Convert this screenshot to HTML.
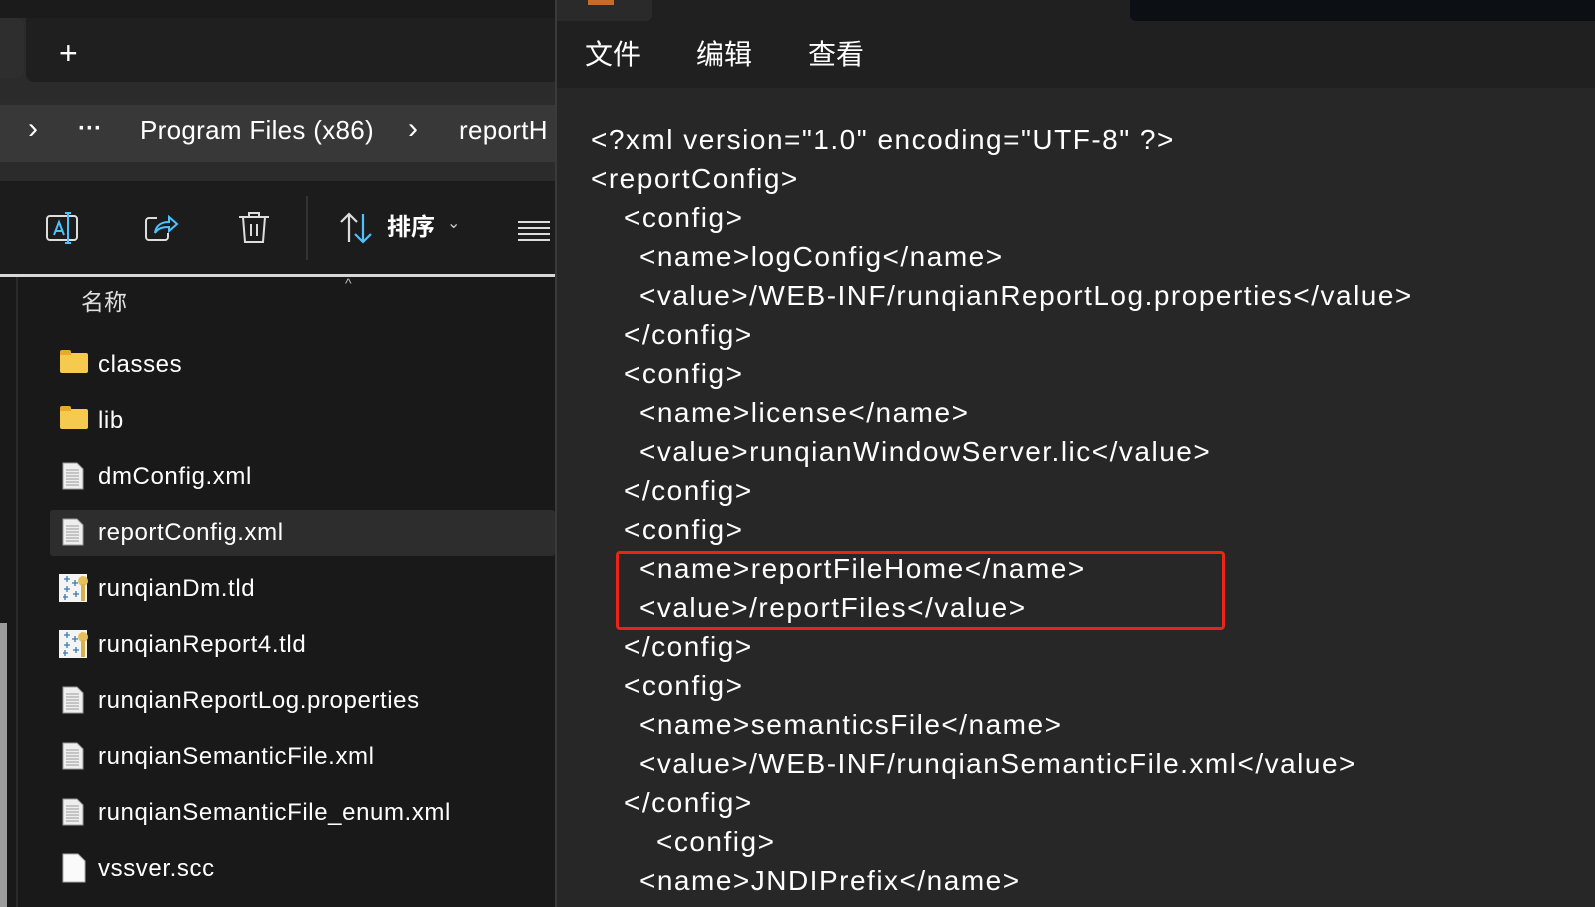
<!DOCTYPE html>
<html><head><meta charset="utf-8"><style>
body{margin:0;width:1595px;height:907px;overflow:hidden;background:#191919;font-family:"Liberation Sans","Noto Sans CJK SC",sans-serif;color:#fff;position:relative}
.a{position:absolute}
.t{position:absolute;white-space:pre;line-height:1}
.ed{font-size:28px;letter-spacing:1.5px}
.f{font-size:24px;letter-spacing:0.6px}
</style></head><body>
<!-- left explorer -->
<div class="a" style="left:0;top:0;width:555px;height:18px;background:#1b1b1b"></div>
<div class="a" style="left:0;top:18px;width:555px;height:82px;background:#2b2b2b"></div>
<div class="a" style="left:26px;top:18px;width:529px;height:64px;background:#1f1f1f;border-radius:0 0 0 8px"></div>
<div class="a" style="left:0;top:18px;width:24px;height:60px;background:#2e2e2e;border-radius:0 8px 8px 0"></div>
<div class="t" style="left:59px;top:37px;font-size:32px;font-weight:300">+</div>
<div class="a" style="left:0;top:99px;width:555px;height:64px;background:#2c2c2c"></div>
<div class="a" style="left:0;top:105px;width:555px;height:57px;background:#383838"></div>
<div class="t" style="left:28px;top:114px;font-size:30px">›</div>
<div class="t" style="left:78px;top:117px;font-size:24px;font-weight:bold">···</div>
<div class="t" style="left:140px;top:117px;font-size:26px;letter-spacing:0.3px">Program Files (x86)</div>
<div class="t" style="left:408px;top:114px;font-size:30px">›</div>
<div class="t" style="left:459px;top:117px;font-size:26px;letter-spacing:0.3px">reportH</div>
<div class="a" style="left:0;top:163px;width:555px;height:18px;background:#2b2b2b"></div>
<div class="a" style="left:0;top:181px;width:555px;height:93px;background:#1c1c1c"></div>
<!-- toolbar icons -->
<svg class="a" style="left:44px;top:208px" width="40" height="40" viewBox="0 0 40 40" fill="none" stroke-width="2"><rect x="3" y="8" width="30" height="24" rx="3" stroke="#ddd"/><path d="M10 27 L15 14 L20 27 M12 23 H18" stroke="#4cc2ff"/><path d="M24 5 V35 M21 5 H27 M21 35 H27" stroke="#4cc2ff"/></svg>
<svg class="a" style="left:141px;top:208px" width="40" height="40" viewBox="0 0 40 40" fill="none" stroke-width="2"><path d="M16 10 H8 a3 3 0 0 0 -3 3 V29 a3 3 0 0 0 3 3 H24 a3 3 0 0 0 3 -3 V25" stroke="#ddd"/><path d="M14 25 C15 17 21 14 28 14 V9 L36 16 L28 23 V19 C22 19 17 20 14 25Z" stroke="#4cc2ff"/></svg>
<svg class="a" style="left:236px;top:208px" width="36" height="40" viewBox="0 0 36 40" fill="none" stroke="#ddd" stroke-width="2"><path d="M3 9 H33 M13 9 V5 H23 V9 M7 9 L9 34 H27 L29 9 M15 16 V28 M21 16 V28"/></svg>
<div class="a" style="left:306px;top:196px;width:2px;height:64px;background:#333"></div>
<svg class="a" style="left:338px;top:210px" width="36" height="36" viewBox="0 0 36 36" fill="none" stroke-width="2.2"><path d="M11 32 V4 M3 12 L11 4 L19 12" stroke="#ddd"/><path d="M25 4 V32 M17 24 L25 32 L33 24" stroke="#4cc2ff"/></svg>
<div class="t" style="left:387px;top:216px;font-size:24px;font-weight:bold">排序</div>
<div class="t" style="left:447px;top:216px;font-size:16px;color:#ccc">⌄</div>
<div class="a" style="left:518px;top:221px;width:32px;height:2px;background:#ddd;box-shadow:0 6px 0 #ddd,0 12px 0 #ddd,0 18px 0 #ddd"></div>
<div class="a" style="left:0;top:274px;width:555px;height:3px;background:#d8d8d8"></div>
<div class="t" style="left:345px;top:276px;font-size:14px;color:#bbb">^</div>
<div class="a" style="left:16px;top:277px;width:2px;height:630px;background:#2a2a2a"></div>
<div class="a" style="left:0;top:623px;width:7px;height:284px;background:#9c9c9c"></div>
<div class="t" style="left:81px;top:291px;font-size:23px;color:#ddd">名称</div>
<div class="a" style="left:50px;top:510px;width:505px;height:46px;background:#2d2d2d;border-radius:3px"></div>
<!-- files -->
<div class="a" style="left:60px;top:353px;width:28px;height:20px;background:#f6c94f;border-radius:2px"></div><div class="a" style="left:60px;top:350px;width:11px;height:5px;background:#e8a92c;border-radius:2px 2px 0 0"></div>
<div class="a" style="left:60px;top:409px;width:28px;height:20px;background:#f6c94f;border-radius:2px"></div><div class="a" style="left:60px;top:406px;width:11px;height:5px;background:#e8a92c;border-radius:2px 2px 0 0"></div>
<div class="t f" style="left:98px;top:353px">classes</div>
<div class="t f" style="left:98px;top:409px">lib</div>
<div class="t f" style="left:98px;top:465px">dmConfig.xml</div>
<div class="t f" style="left:98px;top:521px">reportConfig.xml</div>
<div class="t f" style="left:98px;top:577px">runqianDm.tld</div>
<div class="t f" style="left:98px;top:633px">runqianReport4.tld</div>
<div class="t f" style="left:98px;top:689px">runqianReportLog.properties</div>
<div class="t f" style="left:98px;top:745px">runqianSemanticFile.xml</div>
<div class="t f" style="left:98px;top:801px">runqianSemanticFile_enum.xml</div>
<div class="t f" style="left:98px;top:857px">vssver.scc</div>
<svg class="a" style="left:62px;top:462px" width="22" height="28"><path d="M1 1H15L21 7V27H1Z" fill="#eee" stroke="#999"/><path d="M4 8H17M4 11H17M4 14H17M4 17H17M4 20H17M4 23H17" stroke="#999"/></svg>
<svg class="a" style="left:62px;top:518px" width="22" height="28"><path d="M1 1H15L21 7V27H1Z" fill="#eee" stroke="#999"/><path d="M4 8H17M4 11H17M4 14H17M4 17H17M4 20H17M4 23H17" stroke="#999"/></svg>
<svg class="a" style="left:62px;top:686px" width="22" height="28"><path d="M1 1H15L21 7V27H1Z" fill="#eee" stroke="#999"/><path d="M4 8H17M4 11H17M4 14H17M4 17H17M4 20H17M4 23H17" stroke="#999"/></svg>
<svg class="a" style="left:62px;top:742px" width="22" height="28"><path d="M1 1H15L21 7V27H1Z" fill="#eee" stroke="#999"/><path d="M4 8H17M4 11H17M4 14H17M4 17H17M4 20H17M4 23H17" stroke="#999"/></svg>
<svg class="a" style="left:62px;top:798px" width="22" height="28"><path d="M1 1H15L21 7V27H1Z" fill="#eee" stroke="#999"/><path d="M4 8H17M4 11H17M4 14H17M4 17H17M4 20H17M4 23H17" stroke="#999"/></svg>
<svg class="a" style="left:62px;top:853px" width="24" height="30"><path d="M1 1H16L23 8V29H1Z" fill="#fafafa" stroke="#aaa"/></svg>
<svg class="a" style="left:59px;top:573px" width="30" height="30"><rect x="0" y="1" width="28" height="28" fill="#f4f4f4"/><path d="M5 6h6M8 3v6M13 10h6M16 7v6M5 16h6M8 13v6M14 21h6M17 18v6M4 24h5M6 21v6" stroke="#3a78b5" stroke-width="1.3"/><circle cx="24" cy="8" r="5" fill="#e6c15a"/><rect x="22" y="11" width="4" height="17" fill="#d9b04a"/></svg>
<svg class="a" style="left:59px;top:629px" width="30" height="30"><rect x="0" y="1" width="28" height="28" fill="#f4f4f4"/><path d="M5 6h6M8 3v6M13 10h6M16 7v6M5 16h6M8 13v6M14 21h6M17 18v6M4 24h5M6 21v6" stroke="#3a78b5" stroke-width="1.3"/><circle cx="24" cy="8" r="5" fill="#e6c15a"/><rect x="22" y="11" width="4" height="17" fill="#d9b04a"/></svg>
<!-- right notepad -->
<div class="a" style="left:555px;top:0;width:2px;height:907px;background:#3a3a3a"></div>
<div class="a" style="left:557px;top:0;width:1038px;height:88px;background:#202020"></div>
<div class="a" style="left:557px;top:0;width:95px;height:21px;background:#2a2a2a;border-radius:0 0 6px 0"></div>
<div class="a" style="left:1130px;top:0;width:465px;height:21px;background:#0c0f13;border-radius:0 0 0 6px"></div>
<div class="a" style="left:588px;top:0;width:26px;height:5px;background:#c86a2a"></div>
<div class="t" style="left:585px;top:41px;font-size:28px">文件</div>
<div class="t" style="left:696px;top:41px;font-size:28px">编辑</div>
<div class="t" style="left:808px;top:41px;font-size:28px">查看</div>
<div class="a" style="left:557px;top:88px;width:1038px;height:819px;background:#272727"></div>
<div class="ed">
<div class="t" style="left:591px;top:126px">&lt;?xml version="1.0" encoding="UTF-8" ?&gt;</div>
<div class="t" style="left:591px;top:165px">&lt;reportConfig&gt;</div>
<div class="t" style="left:624px;top:204px">&lt;config&gt;</div>
<div class="t" style="left:639px;top:243px">&lt;name&gt;logConfig&lt;/name&gt;</div>
<div class="t" style="left:639px;top:282px">&lt;value&gt;/WEB-INF/runqianReportLog.properties&lt;/value&gt;</div>
<div class="t" style="left:624px;top:321px">&lt;/config&gt;</div>
<div class="t" style="left:624px;top:360px">&lt;config&gt;</div>
<div class="t" style="left:639px;top:399px">&lt;name&gt;license&lt;/name&gt;</div>
<div class="t" style="left:639px;top:438px">&lt;value&gt;runqianWindowServer.lic&lt;/value&gt;</div>
<div class="t" style="left:624px;top:477px">&lt;/config&gt;</div>
<div class="t" style="left:624px;top:516px">&lt;config&gt;</div>
<div class="t" style="left:639px;top:555px">&lt;name&gt;reportFileHome&lt;/name&gt;</div>
<div class="t" style="left:639px;top:594px">&lt;value&gt;/reportFiles&lt;/value&gt;</div>
<div class="t" style="left:624px;top:633px">&lt;/config&gt;</div>
<div class="t" style="left:624px;top:672px">&lt;config&gt;</div>
<div class="t" style="left:639px;top:711px">&lt;name&gt;semanticsFile&lt;/name&gt;</div>
<div class="t" style="left:639px;top:750px">&lt;value&gt;/WEB-INF/runqianSemanticFile.xml&lt;/value&gt;</div>
<div class="t" style="left:624px;top:789px">&lt;/config&gt;</div>
<div class="t" style="left:656px;top:828px">&lt;config&gt;</div>
<div class="t" style="left:639px;top:867px">&lt;name&gt;JNDIPrefix&lt;/name&gt;</div>
</div>
<div class="a" style="left:616px;top:551px;width:603px;height:73px;border:3px solid #ec2418;border-radius:4px"></div>
</body></html>
